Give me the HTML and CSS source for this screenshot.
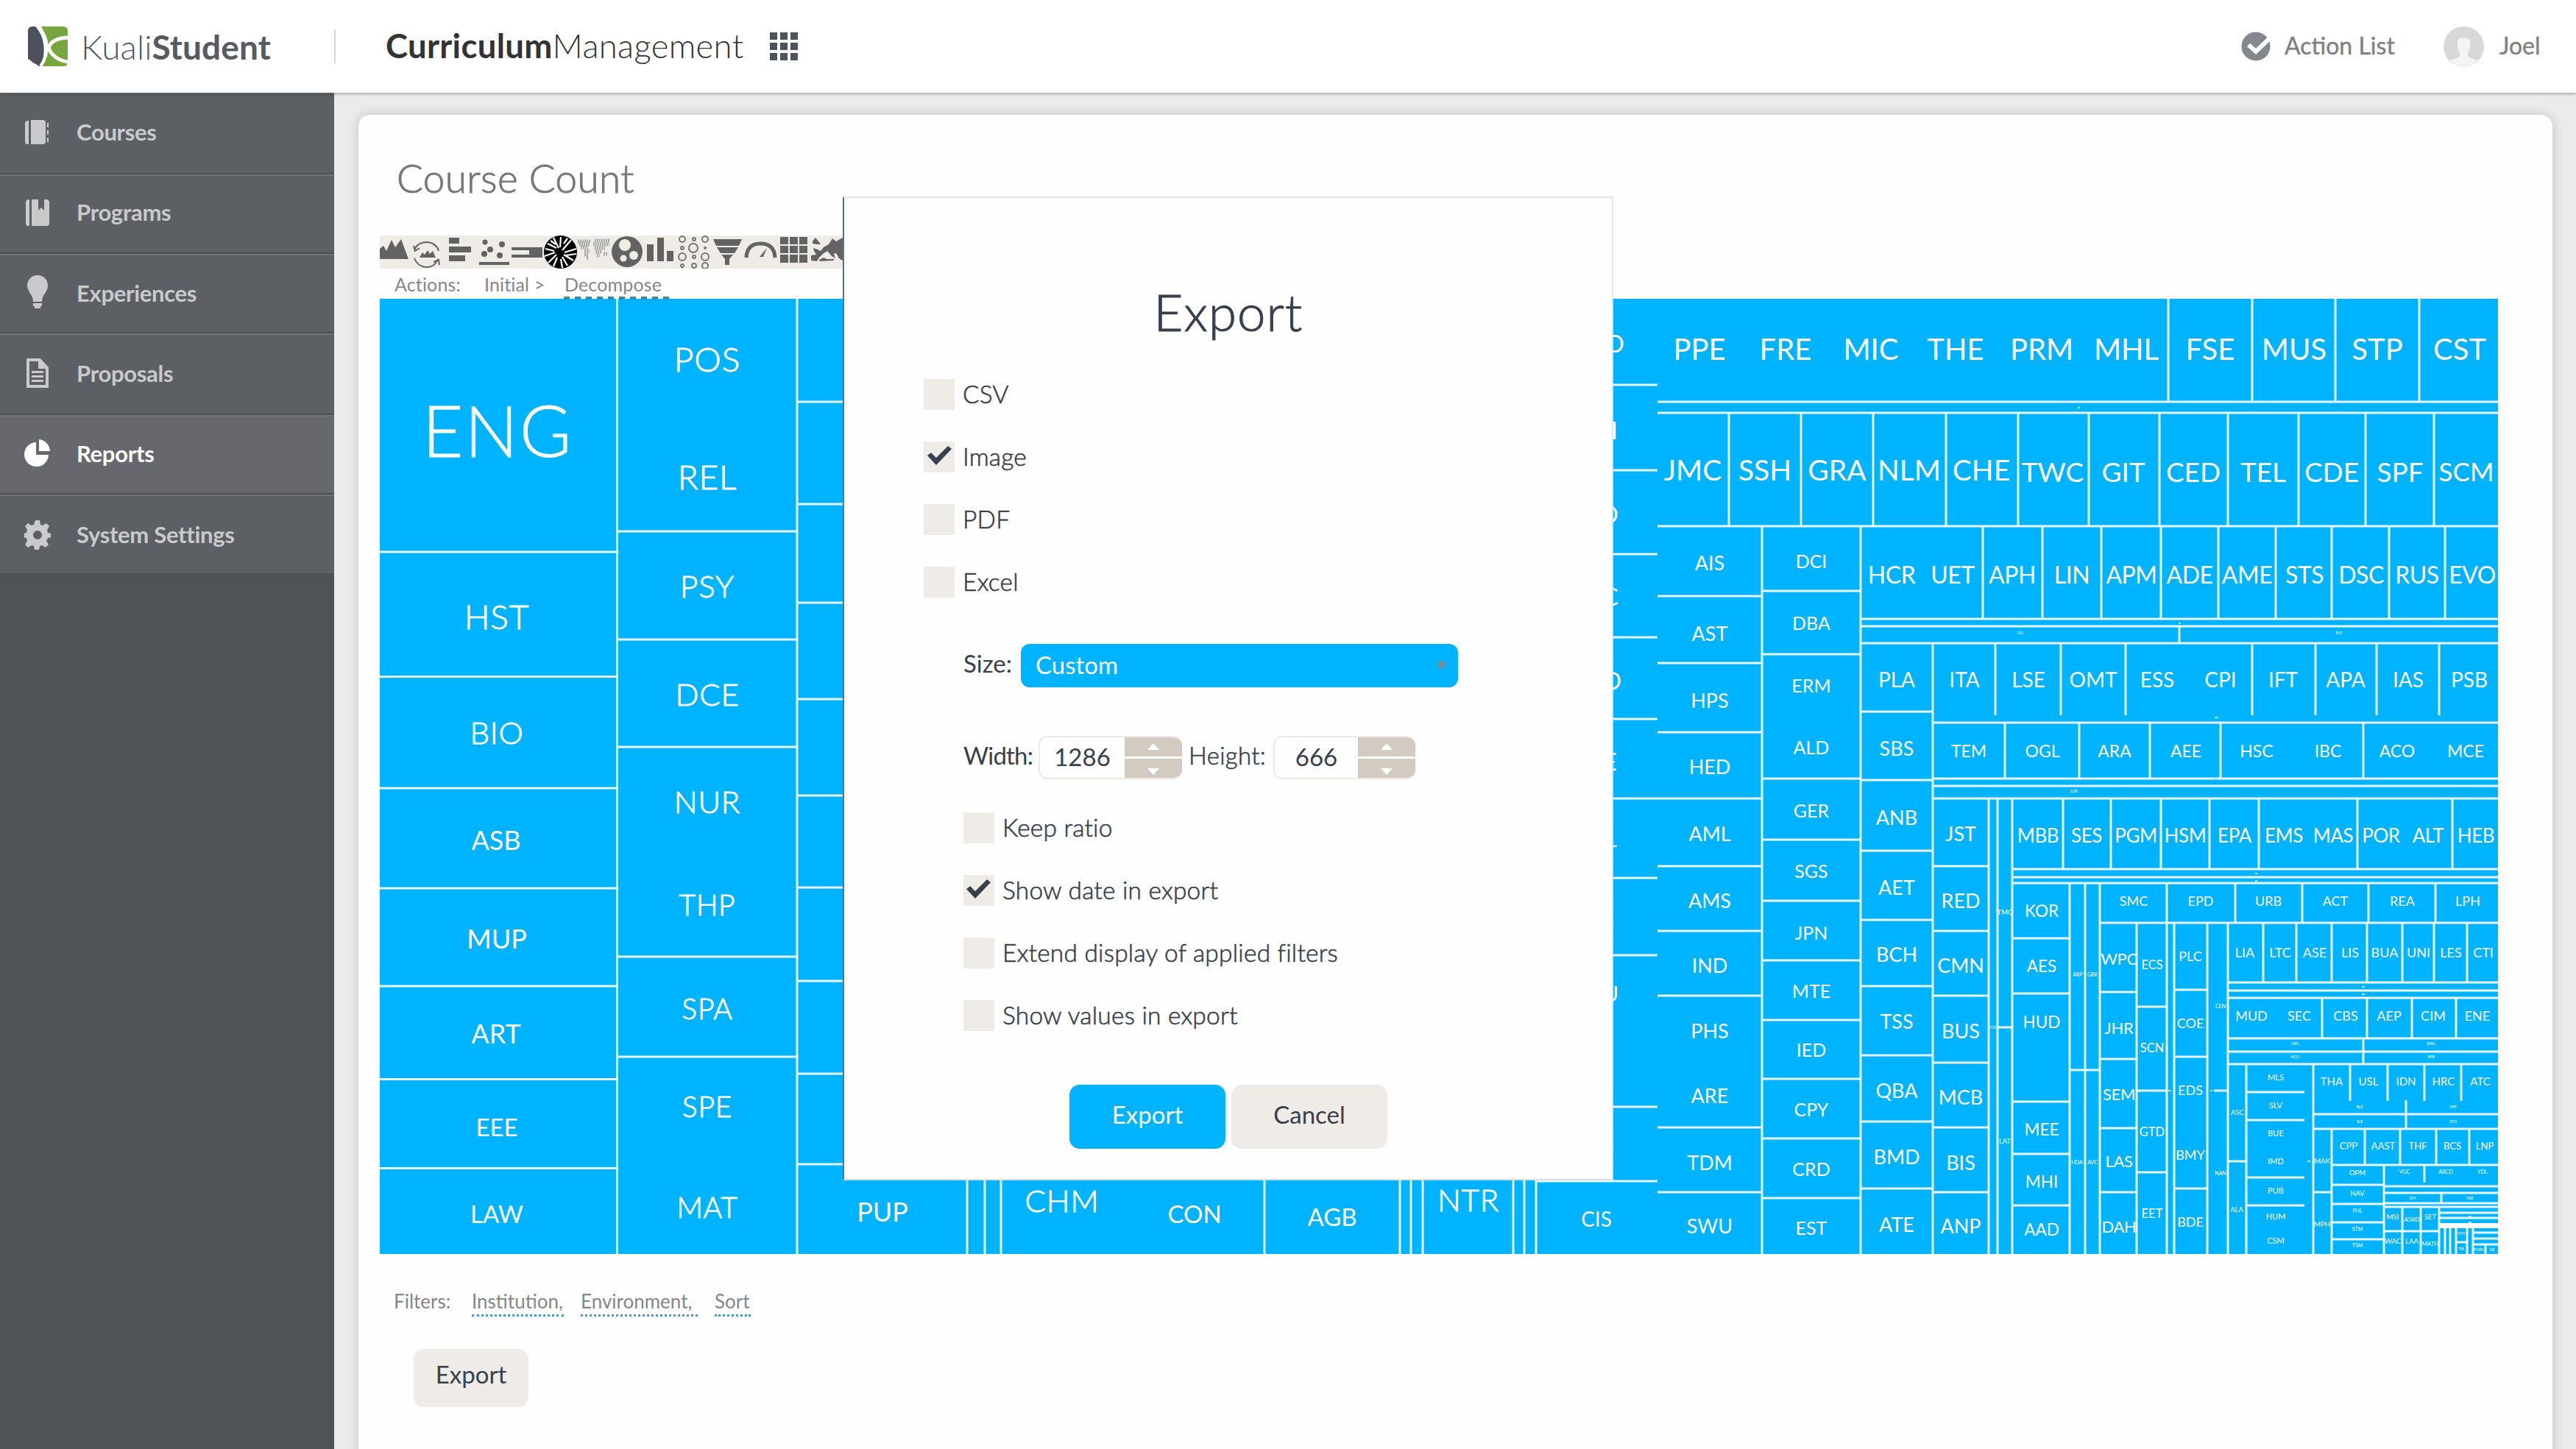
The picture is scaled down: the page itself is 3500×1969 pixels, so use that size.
FILE: index.html
```html
<!DOCTYPE html>
<html lang="en">
<head>
<meta charset="utf-8">
<title>Kuali Student - Curriculum Management</title>
<link rel="stylesheet" href="styles.css">
</head>
<body>
<header class="topbar">
  <div class="brand">
    <svg class="brand-mark" viewBox="0 0 54 54"><path d="M6 0H10C23 14 25 36 17 54H10C8 50 4 46 0 44V6Q0 0 6 0Z" fill="#4c515d"/><path d="M18 0H48Q54 0 54 6V48Q54 54 48 54H18C28 36 28 16 18 0Z" fill="#76a63c"/><path d="M0 46Q10 50 15 54H0Z" fill="#fff"/><path d="M14 0C29 16 29 37 17 54" fill="none" stroke="#fff" stroke-width="4"/><path d="M54 15C36 16 30 22 28 29C31 38 40 46 54 48" fill="none" stroke="#fff" stroke-width="5"/></svg>
    <span class="brand-name">Kuali<b>Student</b></span>
  </div>
  <h1 class="app-name"><b>Curriculum</b>Management</h1>
  <svg class="apps" viewBox="0 0 38 38"><path fill="#4f535c" d="M0 0h10v10H0zM14 0h10v10H14zM28 0h10v10H28zM0 14h10v10H0zM14 14h10v10H14zM28 14h10v10H28zM0 28h10v10H0zM14 28h10v10H14zM28 28h10v10H28z"/></svg>
  <div class="user-tools">
    <svg class="tick" viewBox="0 0 40 40"><circle cx="20" cy="20" r="19.5" fill="#84888e"/><path d="M10 18l10 9L41 7" fill="none" stroke="#fff" stroke-width="6"/></svg>
    <span class="action-list">Action List</span>
    <svg class="avatar" viewBox="0 0 55 55"><circle cx="27.500" cy="27.500" r="27.500" fill="#d8d8d8"/><path d="M19 22q0-7 8.500-7t8.500 7v7q-1 4-3 6v5q1 3 14 6q-8 9-19.500 9t-19.500-9q13-3 14-6v-5q-2-2-3-6z" fill="#f4f4f4"/></svg>
    <span class="user">Joel</span>
  </div>
</header>
<div class="body">
  <nav class="sidebar">
    <a class="item i1"><svg viewBox="0 0 36 48"><path d="M5 8h20q4 0 4 4v26q0 3-4 3H9V8zM2 9h4v32H4q-3 0-3-4V13q0-3 3-4zM31 12h2v6h-2zM31 22h2v6h-2zM31 32h2v6h-2z"/><path d="M7 8v34" stroke="#5c5f64" stroke-width="2"/></svg>Courses</a>
    <a class="item i2"><svg viewBox="0 0 36 48"><path d="M10 7h9v15l4-4 4 4V7h4q3 1 3 4v28q0 4-4 4H10zM7 7v36H5q-3 0-3-4V11q0-4 5-4z"/></svg>Programs</a>
    <a class="item i3"><svg viewBox="0 0 36 48"><path d="M18 0c9 0 14 7 14 14 0 9-8 12-8 22H12C12 26 4 23 4 14 4 7 9 0 18 0zM12 38h12v4h-2v3h-8v-3h-2z"/></svg>Experiences</a>
    <a class="item i4"><svg viewBox="0 0 36 48"><path d="M5 6h16l10 11v25H5z" fill="none" stroke="currentColor" stroke-width="4"/><path d="M19 6h4l9 12H19zM10 21h16v3H10zM10 27h16v3H10zM10 33h16v3H10z"/></svg>Proposals</a>
    <a class="item i5 active"><svg viewBox="0 0 36 48"><path d="M16 9v17h17A16.500 16.500 0 1 1 16 9zM20 5a17 17 0 0 1 15 16H20z"/></svg>Reports</a>
    <a class="item i6"><svg viewBox="0 0 36 48"><path fill-rule="evenodd" d="M15 5h6l1 6 3 1 5-3 4 4-3 5 1 4 5 1v5l-5 1-2 4 3 5-4 4-5-3-3 1-1 5h-6l-1-5-3-1-5 3-4-4 3-5-1-4-5-1v-5l5-1 1-4-3-5 4-4 5 3 3-1zM18 19a6 6 0 1 0 0 12 6 6 0 0 0 0-12z"/></svg>System Settings</a>
  </nav>
  <main class="card">
    <h2 class="title">Course Count</h2>
    <svg class="chart-types" viewBox="516 320 630 45">
      <g fill="#636363">
        <path d="M516 352V338L521 334L525 341L532 326L537 336L545 325L555 352Z"/>
        <path d="M570 350l4-7 3 3 4-6 3 5 4-4 4 9z"/>
        <path d="M563 340q4-11 17-11q13 1 16 12M563 351q4 11 16 12q12 0 16-11M562 334l2 7 6-4M589 356l7-3 1 7" fill="none" stroke="#636363" stroke-width="2"/>
        <path d="M610 323h14v8h-14zM610 335h30v8h-30zM610 347h22v8h-22zM651 356h41v4h-41z"/>
        <circle cx="659" cy="329" r="3.500"/><circle cx="682" cy="332" r="4"/><circle cx="666" cy="339" r="4"/><circle cx="658" cy="345" r="4"/><circle cx="679" cy="347" r="4"/>
        <path d="M695 336h42v14h-42v-4h24v-6h-24z"/>
        <circle cx="761.500" cy="342.500" r="22.500" fill="#000"/>
        <path d="M752 323l7 14M762 322l-1 14M776 326l-12 14M771 324l-5 7M783 338l-16 5M783 345l-14 2M779 354l-13-8M771 361l-7-12M764 364l-2-12M752 362l5-12M745 357l11-11M740 348l14-5M741 338l12 3M744 331l12 6M748 327l7 5" stroke="#fff" stroke-width="2.200"/>
        <g fill="none" stroke="#aaa" stroke-width="5" stroke-dasharray="2 1"><path d="M785 328h18M808 327h20M787 332h14M806 332h22M789 336h10M808 337h14M794 341h7M809 342h8M794 346h6M811 347h4M820 345h5M797 351h3"/></g>
        <circle cx="852" cy="342" r="21"/>
        <g fill="#efebe7"><circle cx="849" cy="333" r="8"/><circle cx="861" cy="347" r="6"/><circle cx="847" cy="351" r="4.500"/></g>
        <path d="M879 332h9v23h-9zM893 323h9v32h-9zM906 341h9v14h-9z"/>
        <g fill="none" stroke="#777" stroke-width="2"><circle cx="927" cy="325" r="4"/><circle cx="943" cy="325" r="2"/><circle cx="958" cy="325" r="4"/><circle cx="927" cy="337" r="2"/><circle cx="942" cy="337" r="6"/><circle cx="958" cy="337" r="1"/><circle cx="927" cy="349" r="5"/><circle cx="943" cy="349" r="2"/><circle cx="958" cy="349" r="5"/><circle cx="927" cy="361" r="2"/><circle cx="943" cy="361" r="3"/><circle cx="958" cy="361" r="4"/></g>
        <path d="M969 325h39l-4 9h-31zM974 336h29l-5 8h-19zM980 346h16l-5 6v8h-6v-8z"/>
        <path d="M1014 350q1-19 19-19q19 0 20 19" fill="none" stroke="#636363" stroke-width="5"/><path d="M1032 349l10-12-5 12z"/>
        <path d="M1060 322h11v10h-11zM1073 322h11v10h-11zM1086 322h11v10h-11zM1060 334h11v10h-11zM1073 334h11v10h-11zM1086 334h11v10h-11zM1060 346h11v11h-11zM1073 346h11v11h-11zM1086 346h11v11h-11z"/>
        <path d="M1104 328l4-5 4 5 3 4h-5l-6-1zM1115 341l4-5 7-4 5-8 5 4 5-3 5-2v32l-6-4-4-7-3 1 2 6-5-3-6-7-6 4-5 5-3 5-8-1v-7l7-1-3-5-1-4 6 2zM1113 353l6-3 4 2 11 0-2 2-18 1z"/>
      </g>
    </svg>
    <div class="actions"><span class="a-label">Actions:</span><span class="a-init">Initial &gt;</span><span class="a-now">Decompose</span></div>
    <svg class="treemap" viewBox="516 406 2878 1298">
      <rect x="516" y="406" width="2878" height="1298" fill="#00b3ff"/>
      <path class="rule" d="M838.500 406V1704M1083 406V1704M516 750H838M516 919.500H838M516 1071H838M516 1207H838M516 1340H838M516 1466.500H838M516 1587.500H838M838 722H1082M838 869H1082M838 1015H1082M838 1300H1082M838 1436H1082
        M1082 546H1200M1082 685H1200M1082 819H1200M1082 950H1200M1082 1081H1200M1082 1206H1200M1082 1333H1200M1082 1459H1200M1082 1582H1200
        M1314 1590V1704M1338 1590V1704M1360 1590V1704M1718 1590V1704M1902 1590V1704M1917 1590V1704M1933 1590V1704M2056 1590V1704M2071 1590V1704M2087 1590V1704
        M2150 523H2252M2150 639H2252M2150 753H2252M2150 866H2252M2150 977H2252M2150 1085H2394M2150 1193H2252M2150 1298H2252M2150 1504H2252M2087 1605H2252
        M2252 546H3394M2252 561H3394M2252 715H3394M2946 406V546M3060 406V546M3173 406V546M3287 406V546
        M2349 561V715M2447 561V715M2545 561V715M2644 561V715M2742 561V715M2838 561V715M2934 561V715M3027 561V715M3123 561V715M3214 561V715M3307 561V715
        M2394 715V1704M2528 715V1704M2626 874V1704M2528 841H3394M2528 851H3394M2528 874H3394M2961 851V874
        M2694 715V841M2775 715V841M2855 715V841M2936 715V841M3014 715V841M3092 715V841M3168 715V841M3246 715V841M3322 715V841
        M2711 874V972M2800 874V972M2888 874V972M3060 874V972M3146 874V972M3229 874V972M3314 874V972M2626 982H3394M2528 967H2626
        M2724 982V1058M2825 982V1058M2921 982V1058M3017 982V1058M3211 982V1058M2626 1058H3394M2626 1068H3394M2626 1085H3394
        M2252 810H2394M2252 901H2394M2252 995H2394M2252 1177H2394M2252 1265H2394M2252 1353H2394M2252 1532H2394M2252 1620H2394
        M2394 803H2528M2394 889H2528M2394 1058H2528M2394 1141H2528M2394 1224H2528M2394 1305H2528M2394 1386H2528M2394 1466H2528M2394 1547H2528M2394 1628H2528
        M2528 1060H2626M2528 1156H2626M2528 1250H2626M2528 1340H2626M2528 1434H2626M2528 1524H2626M2528 1615H2626
        M2626 1177H2702M2626 1265H2702M2626 1353H2702M2626 1444H2702M2626 1532H2702M2626 1620H2702M2702 1085V1704M2714 1085V1704M2734 1085V1704M2714 1396H2734
        M2803 1085V1181M2868 1085V1181M2936 1085V1181M3002 1085V1181M3069 1085V1181M3203 1085V1181M3332 1085V1181M2734 1181H3394M2734 1192H3394M2734 1200H3394
        M2734 1275H2812M2734 1350H2812M2734 1497H2812M2734 1568H2812M2734 1638H2812M2812 1200V1704M2833 1200V1704M2853 1200V1704M2812 1454H2853
        M2853 1254H3394M2944 1200V1704M3037 1200V1254M3128 1200V1254M3218 1200V1254M3309 1200V1254
        M2903 1254V1704M2853 1348H2903M2853 1439H2903M2853 1533H2903M2853 1620H2903M2903 1368H2944M2903 1482H2944M2903 1593H2944M2954 1254V1704M2999 1254V1704M2954 1345H2999M2954 1436H2999M2954 1615H2999M3008 1482H3027M3027 1254V1704
        M3075 1254V1335M3120 1254V1335M3168 1254V1335M3216 1254V1335M3264 1254V1335M3307 1254V1335M3352 1254V1335M3027 1335H3394M3027 1346H3394M3027 1356H3394
        M3155 1356V1411M3216 1356V1411M3277 1356V1411M3337 1356V1411M3027 1411H3394M3027 1429H3394M3027 1446H3394M3211 1411V1446
        M3052 1446V1704M3143 1446V1704M3027 1578H3052M3052 1484H3131M3052 1522H3131M3052 1600H3131M3052 1638H3131
        M3193 1446V1496M3244 1446V1496M3294 1446V1496M3344 1446V1496M3269 1495V1534M3143 1514H3394M3143 1534H3394M3168 1534V1704M3213 1534V1583M3261 1534V1583M3310 1534V1583M3355 1534V1583
        M3143 1620H3168M3168 1583H3394M3239 1583V1704M3168 1610H3239M3168 1636H3239M3168 1661H3239M3168 1684H3239M3294 1583V1607M3239 1612H3394M3239 1621H3394M3239 1635H3394M3239 1640H3394M3317 1621V1635
        M3264 1640V1704M3289 1640V1704M3314 1640V1704M3239 1673H3314M3314 1648H3394M3314 1655H3394M3322 1668V1704M3329 1668V1704M3337 1668V1704M3352 1668V1704M3360 1668V1704M3337 1688H3352M3360 1675H3394M3360 1683H3394M3360 1691H3394M3377 1691V1704"/>
      <rect x="3314" y="1662" width="80" height="7" fill="#fff"/>
      <g class="large" font-size="96"><text x="676" y="586">ENG</text></g>
      <g class="large" font-size="46"><text x="675" y="838">HST</text><text x="961" y="488">POS</text><text x="961" y="648">REL</text></g>
      <g class="large" font-size="42"><text x="675" y="996">BIO</text><text x="961" y="797">PSY</text><text x="961" y="944">DCE</text><text x="961" y="1090">NUR</text><text x="1443" y="1632">CHM</text><text x="1995" y="1631">NTR</text></g>
      <g class="large" font-size="39"><text x="961" y="1230">THP</text><text x="961" y="1371">SPA</text><text x="961" y="1504">SPE</text><text x="961" y="1641">MAT</text></g>
      <g font-size="36"><text x="674" y="1142">ASB</text><text x="675" y="1276">MUP</text><text x="674" y="1405">ART</text><text x="1199" y="1647">PUP</text></g>
      <g font-size="33"><text x="675" y="1532">EEE</text><text x="675" y="1650">LAW</text><text x="1623" y="1650">CON</text><text x="1810" y="1654">AGB</text></g>
      <g font-size="28"><text x="2169" y="1657">CIS</text></g>
      <g font-size="33" class="cut"><text x="2207" y="467">O</text><text x="2198" y="585">I</text><text x="2199" y="699">O</text><text x="2199" y="811">C</text><text x="2203" y="925">D</text><text x="2197" y="1035">E</text></g>
      <g font-size="29" class="cut"><text x="2197" y="1141">L</text><text x="2193" y="1252">S</text><text x="2199" y="1351">U</text><text x="2193" y="1558">S</text></g>
      <g font-size="40"><text x="2309" y="475">PPE</text><text x="2426" y="475">FRE</text><text x="2542" y="475">MIC</text><text x="2657" y="475">THE</text><text x="2774" y="475">PRM</text><text x="2889" y="475">MHL</text><text x="3003" y="475">FSE</text><text x="3117" y="475">MUS</text><text x="3230" y="475">STP</text><text x="3342" y="475">CST</text></g>
      <g font-size="39"><text x="2300" y="639">JMC</text><text x="2398" y="639">SSH</text><text x="2496" y="639">GRA</text><text x="2594" y="639">NLM</text><text x="2692" y="639">CHE</text></g>
      <g font-size="37"><text x="2789" y="642">TWC</text><text x="2885" y="642">GIT</text><text x="2980" y="642">CED</text><text x="3075" y="642">TEL</text><text x="3168" y="642">CDE</text><text x="3261" y="642">SPF</text></g>
      <g font-size="35"><text x="3351" y="641">SCM</text></g>
      <g font-size="32" class="tight"><text x="2570" y="781">HCR</text><text x="2653" y="781">UET</text><text x="2734" y="781">APH</text><text x="2815" y="781">LIN</text><text x="2896" y="781">APM</text><text x="2975" y="781">ADE</text><text x="3053" y="781">AME</text><text x="3131" y="781">STS</text><text x="3208" y="781">DSC</text><text x="3284" y="781">RUS</text><text x="3359" y="781">EVO</text></g>
      <g font-size="28"><text x="2577" y="924">PLA</text><text x="2669" y="924">ITA</text><text x="2756" y="924">LSE</text><text x="2844" y="924">OMT</text><text x="2931" y="924">ESS</text><text x="3017" y="924">CPI</text><text x="3102" y="924">IFT</text><text x="3187" y="924">APA</text><text x="3272" y="924">IAS</text><text x="3355" y="924">PSB</text></g>
      <g font-size="23"><text x="2675" y="1021">TEM</text><text x="2775" y="1021">OGL</text><text x="2873" y="1021">ARA</text><text x="2970" y="1021">AEE</text><text x="3066" y="1021">HSC</text><text x="3163" y="1021">IBC</text><text x="3257" y="1021">ACO</text><text x="3350" y="1021">MCE</text></g>
      <g font-size="27"><text x="2323" y="765">AIS</text><text x="2323" y="861">AST</text><text x="2323" y="952">HPS</text><text x="2323" y="1042">HED</text><text x="2323" y="1133">AML</text><text x="2323" y="1224">AMS</text><text x="2323" y="1312">IND</text><text x="2323" y="1401">PHS</text><text x="2323" y="1489">ARE</text><text x="2323" y="1580">TDM</text><text x="2323" y="1666">SWU</text>
        <text x="2577" y="1017">SBS</text><text x="2577" y="1111">ANB</text><text x="2577" y="1206">AET</text><text x="2577" y="1297">BCH</text><text x="2577" y="1388">TSS</text><text x="2577" y="1482">QBA</text><text x="2577" y="1572">BMD</text><text x="2577" y="1664">ATE</text>
        <text x="2664" y="1133">JST</text><text x="2664" y="1224">RED</text><text x="2664" y="1312">CMN</text><text x="2664" y="1401">BUS</text><text x="2664" y="1491">MCB</text><text x="2664" y="1580">BIS</text><text x="2664" y="1666">ANP</text></g>
      <g font-size="26" class="tight"><text x="2769" y="1136">MBB</text><text x="2835" y="1136">SES</text><text x="2902" y="1136">PGM</text><text x="2969" y="1136">HSM</text><text x="3036" y="1136">EPA</text><text x="3103" y="1136">EMS</text><text x="3170" y="1136">MAS</text><text x="3235" y="1136">POR</text><text x="3299" y="1136">ALT</text><text x="3364" y="1136">HEB</text></g>
      <g font-size="25"><text x="2461" y="763">DCI</text><text x="2461" y="847">DBA</text><text x="2461" y="932">ERM</text><text x="2461" y="1016">ALD</text><text x="2461" y="1102">GER</text><text x="2461" y="1184">SGS</text><text x="2461" y="1268">JPN</text><text x="2461" y="1347">MTE</text><text x="2461" y="1427">IED</text><text x="2461" y="1508">CPY</text><text x="2461" y="1589">CRD</text><text x="2461" y="1669">EST</text></g>
      <g font-size="22.500"><text x="2774" y="1238">KOR</text><text x="2774" y="1313">AES</text><text x="2774" y="1389">HUD</text><text x="2774" y="1535">MEE</text><text x="2774" y="1606">MHI</text><text x="2774" y="1671">AAD</text></g>
      <g font-size="22" class="tight"><text x="2879" y="1303">WPC</text><text x="2879" y="1397">JHR</text><text x="2879" y="1487">SEM</text><text x="2879" y="1578">LAS</text><text x="2879" y="1667">DAH</text></g>
      <g font-size="18"><text x="2899" y="1225">SMC</text><text x="2990" y="1225">EPD</text><text x="3082" y="1225">URB</text><text x="3173" y="1225">ACT</text><text x="3264" y="1225">REA</text><text x="3353" y="1225">LPH</text>
        <text x="2976" y="1300">PLC</text><text x="2976" y="1391">COE</text><text x="2976" y="1482">EDS</text><text x="2976" y="1570">BMY</text><text x="2976" y="1661">BDE</text>
        <text x="3050" y="1295">LIA</text><text x="3098" y="1295">LTC</text><text x="3145" y="1295">ASE</text><text x="3193" y="1295">LIS</text><text x="3240" y="1295">BUA</text><text x="3286" y="1295">UNI</text><text x="3330" y="1295">LES</text><text x="3374" y="1295">CTI</text>
        <text x="3059" y="1381">MUD</text><text x="3124" y="1381">SEC</text><text x="3187" y="1381">CBS</text><text x="3246" y="1381">AEP</text><text x="3306" y="1381">CIM</text><text x="3366" y="1381">ENE</text></g>
      <g font-size="16.500"><text x="2924" y="1311">ECS</text><text x="2924" y="1424">SCN</text><text x="2924" y="1538">GTD</text><text x="2924" y="1649">EET</text></g>
      <g font-size="15"><text x="3168" y="1470">THA</text><text x="3218" y="1470">USL</text><text x="3269" y="1470">IDN</text><text x="3320" y="1470">HRC</text><text x="3370" y="1470">ATC</text></g>
      <g font-size="13"><text x="3191" y="1557">CPP</text><text x="3238" y="1557">AAST</text><text x="3285" y="1557">THF</text><text x="3332" y="1557">BCS</text><text x="3376" y="1557">LNP</text></g>
      <g font-size="11"><text x="3092" y="1464">MLS</text><text x="3092" y="1502">SLV</text><text x="3092" y="1540">BUE</text><text x="3092" y="1578">IMD</text><text x="3092" y="1618">PUB</text><text x="3092" y="1653">HUM</text><text x="3092" y="1686">CSM</text></g>
      <g font-size="9.500"><text x="2724" y="1240">TMC</text><text x="2724" y="1551">LAT</text><text x="3040" y="1512">ASC</text><text x="3039" y="1644">ALA</text><text x="3155" y="1578">MAK</text><text x="3155" y="1664">MPH</text><text x="3203" y="1594">OPM</text><text x="3203" y="1622">NAV</text><text x="3251" y="1654">MSI</text><text x="3302" y="1654">SET</text><text x="3251" y="1687">WAC</text><text x="3277" y="1687">LAA</text></g>
      <g font-size="8"><text x="3277" y="1657">ASRD</text><text x="3302" y="1690">MATH</text></g>
      <g font-size="7"><text x="2823" y="1324">ARP</text><text x="2843" y="1324">GRK</text><text x="2822" y="1579">HDA</text><text x="2843" y="1579">AVC</text><text x="3017" y="1367">CEN</text><text x="3017" y="1594">NAN</text><text x="3203" y="1645">PHL</text><text x="3203" y="1670">STM</text><text x="3203" y="1692">TSM</text><text x="3267" y="1592">VGC</text><text x="3323" y="1592">ABCD</text><text x="3373" y="1592">YDL</text></g>
      <g font-size="5"><text x="2745" y="860">LSC</text><text x="3178" y="860">EXT</text><text x="2708" y="1396">GIS</text><text x="2818" y="1075">LDR</text><text x="3118" y="1418">ABS</text><text x="3303" y="1418">EMG</text><text x="3118" y="1436">MCO</text><text x="3303" y="1436">HEB</text><text x="3206" y="1504">BLE</text><text x="3333" y="1504">HPE</text><text x="3206" y="1524">SLE</text><text x="3333" y="1524">STH</text><text x="3278" y="1628">SNT</text><text x="3356" y="1628">HSE</text><text x="3344" y="1676">STH</text><text x="3344" y="1697">TBI</text><text x="3368" y="1698">FORG</text><text x="3386" y="1698">ISE</text></g>
      <path class="specks" d="M2823 554h3M2960 847h3M3009 975h5M3009 1058h4M3064 1187h3M3064 1197h3M3209 1341h4M3209 1351h4M3003 1482h3M3135 1578h4M3315 1611h4M3354 1653h4M3354 1661h4M2946 1482h4"/>
    </svg>
    <div class="filters"><span class="f-label">Filters:</span><a class="f1">Institution,</a><a class="f2">Environment,</a><a class="f3">Sort</a></div>
    <button class="btn page-export">Export</button>
  </main>
</div>
<section class="modal">
  <h2 class="modal-title">Export</h2>
  <div class="formats">
    <label class="check"><i></i><span>CSV</span></label>
    <label class="check"><i><svg viewBox="0 0 42 42"><path d="M5 19l5-4 7 7L33 6l5 4-21 22z"/></svg></i><span>Image</span></label>
    <label class="check"><i></i><span>PDF</span></label>
    <label class="check"><i></i><span>Excel</span></label>
  </div>
  <div class="size-row"><span class="size-label">Size:</span><div class="select"><span>Custom</span><em></em></div></div>
  <div class="dims">
    <span class="w-label">Width:</span>
    <div class="number"><span>1286</span><div class="spin"><b class="up"></b><b class="down"></b></div></div>
    <span class="h-label">Height:</span>
    <div class="number second"><span>666</span><div class="spin"><b class="up"></b><b class="down"></b></div></div>
  </div>
  <div class="formats options">
    <label class="check"><i></i><span>Keep ratio</span></label>
    <label class="check"><i><svg viewBox="0 0 42 42"><path d="M4 19l5-4 7 7L32 6l5 4-21 22z"/></svg></i><span>Show date in export</span></label>
    <label class="check"><i></i><span>Extend display of applied filters</span></label>
    <label class="check"><i></i><span>Show values in export</span></label>
  </div>
  <div class="buttons"><button class="btn primary">Export</button><button class="btn">Cancel</button></div>
</section>
</body>
</html>
```
FILE: styles.css
```css
* { box-sizing: border-box; }
body { margin: 0; width: 3500px; height: 1969px; overflow: hidden; position: relative; display: flex; flex-direction: column; background: #ebebea; font-family: Lato, "Open Sans", sans-serif; color: #37404d; }
h1, h2 { margin: 0; font-weight: 300; }
svg { display: block; flex: none; }

.topbar { height: 126px; flex: none; display: flex; align-items: center; background: #fff; box-shadow: 0 2px 4px rgba(0,0,0,.28); position: relative; }
.brand { width: 456px; height: 46px; flex: none; display: flex; align-items: center; padding-left: 38px; border-right: 2px solid #d6d6d6; }
.brand-mark { width: 54px; height: 54px; margin-right: 18px; }
.brand-name { font-size: 46px; letter-spacing: .1px; font-weight: 300; color: #555a63; white-space: nowrap; }
.brand-name b { font-weight: 700; }
.app-name { margin-left: 68px; width: 522px; padding-bottom: 2px; font-size: 45.5px; letter-spacing: .3px; line-height: 54px; color: #333; white-space: nowrap; }
.app-name b { font-weight: 700; }
.apps { width: 38px; height: 38px; }
.user-tools { margin-left: auto; display: flex; align-items: center; height: 126px; width: 455px; font-size: 32px; color: #808080; white-space: nowrap; }
.user-tools span { padding-bottom: 4px; -webkit-text-stroke: .4px; }
.tick { width: 40px; height: 40px; margin-right: 19px; }
.action-list { width: 216px; }
.avatar { width: 55px; height: 55px; margin-right: 21px; }

.body { flex: 1; display: flex; min-height: 0; }
.sidebar { width: 454px; flex: none; background: #4f5357; display: flex; flex-direction: column; }
.item { display: flex; align-items: center; gap: 35px; padding: 0 0 2px 33px; height: 108px; background: #5c5f64; border-bottom: 2px solid #4c4f54; box-shadow: inset 0 2px #6f7277; color: #c9cacc; font-size: 31px; font-weight: 700; letter-spacing: -.3px; white-space: nowrap; }
.item svg { width: 36px; height: 48px; fill: currentColor; }
.i1, .i4 { height: 111px; }
.i1, .i2 { padding-bottom: 4px; }
.i3, .i6 { padding-bottom: 0; }
.active { background: #67686e; color: #fff; }
.i6 { height: 107px; border-bottom: 0; }

.card { flex: 1; margin: 30px 32px 0 33px; height: 1850px; padding: 0 0 0 29px; border-radius: 16px; background: #fefefe; box-shadow: 0 0 16px rgba(0,0,0,.18); display: flex; flex-direction: column; }
.title { height: 164px; flex: none; padding: 52px 0 0 23px; font-size: 53px; letter-spacing: .4px; line-height: 68px; color: #76777a; -webkit-text-stroke: .9px; white-space: nowrap; }
.chart-types { width: 630px; height: 45px; background: #efebe7; }
.actions { height: 41px; flex: none; padding: 4px 0 0 20px; display: flex; font-size: 25px; letter-spacing: .15px; line-height: 34px; color: #85868a; white-space: nowrap; }
.a-label { width: 122px; }
.a-init { width: 109px; }
.a-now { width: 143px; position: relative; }
.a-now::after { content: ""; position: absolute; left: -1px; top: 34px; width: 143px; height: 4px; background: repeating-linear-gradient(90deg, #3587b4 0 8px, transparent 8px 15px); z-index: 1; }
.treemap { width: 2878px; height: 1298px; }
.treemap text { fill: #fff; text-anchor: middle; transform: translateY(.36em); }
.treemap .cut text { text-anchor: end; }
.large { font-weight: 300; letter-spacing: .02em; stroke: #fff; stroke-width: .9px; }
.tight { letter-spacing: -.015em; }
.rule { fill: none; stroke: #e9f8ff; stroke-width: 3; }
.specks { fill: none; stroke: #b9eaff; stroke-width: 2; }
.filters { display: flex; padding: 46px 0 0 19px; font-size: 26px; line-height: 36px; color: #85868a; white-space: nowrap; }
.filters a { border-bottom: 3px dotted #3f9fd0; height: 39px; }
.f-label { width: 106px; }
.f1 { width: 125px; margin-right: 23px; }
.f2 { width: 159px; margin-right: 23px; }
.f3 { width: 49px; }
.btn { border: 0; padding: 0 0 8px; font: 400 33px Lato, sans-serif; background: #efebe7; color: #37404d; border-radius: 14px; width: 212px; height: 87px; white-space: nowrap; }
.page-export { width: 156px; height: 79px; margin: 44px 0 0 46px; padding-bottom: 12px; }

.modal { position: absolute; left: 1145px; top: 267px; width: 1047px; height: 1337px; background: #fefefe; border: 2px solid #e8e6e4; border-left-color: #5f7482; border-bottom-color: #d9dee0; padding: 0 0 0 108px; display: flex; flex-direction: column; font-size: 33px; }
.modal-title { height: 246px; flex: none; padding-top: 113px; margin-left: -107px; text-align: center; font-size: 69px; letter-spacing: 1px; line-height: 84px; -webkit-text-stroke: .9px; }
.formats { display: flex; flex-direction: column; gap: 43px; }
.check { display: flex; align-items: center; gap: 11px; height: 42px; font-size: 33.5px; font-weight: 300; letter-spacing: .2px; -webkit-text-stroke: .6px; white-space: nowrap; }
.check span { padding-bottom: 3px; }
.check i { width: 42px; height: 42px; background: #efebe7; }
.check svg { width: 42px; height: 42px; fill: #37404d; }
.size-row { display: flex; align-items: center; margin: 63px 0 0 54px; height: 59px; }
.size-label { width: 78px; white-space: nowrap; padding-bottom: 7px; }
.select { width: 594px; height: 59px; padding: 0 17px 3px 20px; border-radius: 12px; background: #00b3ff; color: #fff; display: flex; align-items: center; justify-content: space-between; }
.select em { width: 10px; height: 10px; background: #6b8d9e; border-radius: 3px; }
.dims { display: flex; align-items: center; margin: 66px 0 0 54px; height: 59px; white-space: nowrap; }
.w-label { width: 102px; padding-bottom: 7px; letter-spacing: -.8px; }
.h-label { width: 115px; padding-bottom: 7px; font-weight: 300; letter-spacing: .3px; -webkit-text-stroke: .6px; }
.number { width: 195px; height: 59px; margin-right: 9px; display: flex; border-radius: 12px; overflow: hidden; border: 2px solid #ece9e6; border-right: 0; align-items: center; }
.number span { flex: 1; text-align: center; padding-bottom: 3px; }
.second { width: 193px; }
.spin { width: 78px; height: 59px; display: flex; flex-direction: column; gap: 3px; }
.spin b { height: 28px; background: #d3cac1; display: flex; align-items: center; justify-content: center; }
.spin b::before { content: ""; border: 8px solid transparent; }
.spin .up::before { border-top-width: 0; border-bottom: 9px solid #fff; }
.spin .down::before { border-bottom-width: 0; border-top: 9px solid #fff; margin-top: 6px; }
.options { margin: 45px 0 0 54px; }
.buttons { display: flex; gap: 8px; margin: 73px 0 0 198px; }
.primary { background: #00b3ff; color: #fff; }
```
